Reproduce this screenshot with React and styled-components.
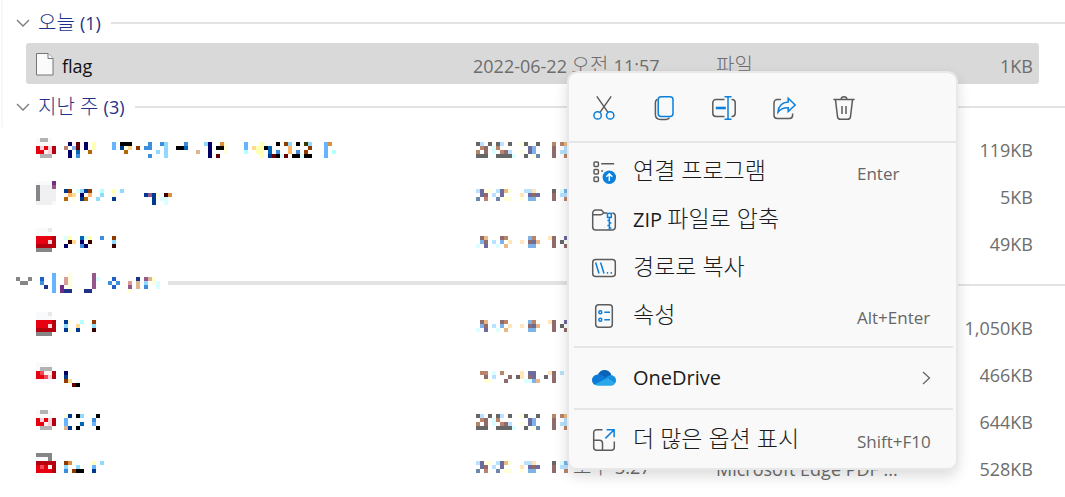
import React from 'react';
import styled, { createGlobalStyle } from 'styled-components';

const palette = {
  k: '#000000', n: '#000066', m: '#660000', M: '#3a0000', b: '#003a90', B: '#0066b6',
  u: '#3b8fdc', s: '#66b3ff', l: '#90d9ff', c: '#b6ffff', C: '#dbffff', y: '#ffffb6',
  Y: '#ffffdb', o: '#ffb666', O: '#ffdb90', t: '#db903a', r: '#903a00', a: '#b66600',
  p: '#dbb690', q: '#3a3a00', d: '#1f5fc8', N: '#1e3287', v: '#6f2f86', V: '#96588a',
  x: '#dc9c9c', R: '#e60012', D: '#b5000f', P: '#fbd3d8', W: '#fff0f0', Q: '#f04a58',
  G: '#b3b3b3', g: '#868686', e: '#e8e8e8', f: '#f9fafc', i: '#f0f0f3',
  1: '#666666', 2: '#8f6b6b', 3: '#b8856b', 4: '#7fb2e8', 5: '#6b6b9c', 6: '#e8b885',
  7: '#ffe6b8', 8: '#b8e2ff', 9: '#6b88a8',
};

// cells are listed column by column, top to bottom; "-" is an empty column
const icons = {
  scan: 'ffRRf GfPRG GfRWG ffPPG ..DD.',
  plain: 'fggggi fiiiii fiiiii fiiiii vViiif',
  solid: 'ffRRDg ffRRDg ffRRDg efRPDg ..DDD.',
  fold: 'ffRRf fGQRf fGWQf fGWPf ..DD.',
  dark: 'gfDRR gfDQR gfDRR ggDWR ..DDD',
};

const dates = {
  a: '1.31 83.1 .221 1... .CC. 13.1 8.31 ..21 1.81 ...C - Y.Y. 1..1 .55. .44Y 1..9 - - - 3222 - 3.8. 6883',
  b: '8.9 55. Y23 Y.. .8. 8.9 55. 6.Y Y.Y - - .7Y 8.. 854 724 .5. - - - 122 - C8. 483',
  c: '..C 24. 625 - .8. ..C 24. 3.6 .7. - - .7. - 424 354 .6. - - 7.. 222 - .1. 5.2',
  d: '- 3.. 32Y ..Y C8. - 3.. ..2 .2. - .1. 77. ..C 52C 554 ..6 - .1. 7.. 222 - 8..',
};

const olderLabel =
  '.g ..g ..g .g - - .du.. ...N. - sssss - ...vv .xx.N YYYYN - - - ....N ....N VVVV. .C - - ..u.. .d.d. ..u.. - - ..xVY - .Npp. - .Vlu. .p .YY.. ..CC.';

const lastWeek = [
  {
    icon: 'scan', iconTop: 1, nameTop: 2, dateTop: 2, date: 'a', size: '119KB',
    name: '.3.. n.nn .4.. mmBu - nn.. ..a. yy.. - - - - ss.. - kb.. kYa. kO.. - .r.. - .u.. uu.u - ..l. u... llll - - .k.. .k.. uB.. - - ..p. - l... nnnn - .k.m tk.. YYY. - - - - ssc. - .O.. .yy. yyyy .k.. .BBb ...m k.uk ...C r..m loo. ...k k.uk ...C q.rk lr.k - - - ssss t... ..c.',
  },
  {
    icon: 'plain', iconTop: 0, nameTop: 2, dateTop: 2, date: 'b', size: '5KB',
    name: 'b.a ro. .OY C.. lnb b.a ro. - ..l cl. - - yYb - l.. - - - - - .b.. .V.. .bbb .Y.. ..C. .MCC .t..',
  },
  {
    icon: 'solid', iconTop: 0, nameTop: 2, dateTop: 2, date: 'c', size: '49KB',
    name: 'C.n yM. .O. - Bnu C.n yM. - - u.. - - rlM',
  },
];

const older = [
  {
    icon: 'solid', iconTop: 0, nameTop: 2, dateTop: 2, date: 'c', size: '1,050KB',
    name: 'blb Y.Y - .Ob c.. - - rlM',
  },
  { icon: 'fold', iconTop: 1, nameTop: 3, dateTop: 3, date: 'd', size: '466KB', name: 'nbr. ..O. ...m ...k' },
  {
    icon: 'scan', iconTop: 1, nameTop: 2, dateTop: 2, date: 'a', size: '644KB',
    name: 'Yssp b..b - k..k l.B. - - .us. k..k',
  },
  {
    icon: 'dark', iconTop: 0, nameTop: 2, dateTop: 2, date: 'b', size: '528KB',
    name: 'rlu t.. ..r .lk ..k - - ysb - l..',
    time: '오후 3:27', type: 'Microsoft Edge PDF ...',
  },
];

function Mosaic({ cells, top = 0, rows = 7 }) {
  const columns = cells.split(' ');
  return (
    <MosaicSvg width={columns.length * 4} height={rows * 4} shapeRendering="crispEdges" aria-hidden="true">
      {columns.map((column, x) =>
        [...column].map((cell, y) =>
          palette[cell] ? (
            <rect key={`${x}-${y}`} x={x * 4} y={(y + top) * 4} width="4" height="4" fill={palette[cell]} />
          ) : null
        )
      )}
    </MosaicSvg>
  );
}

// Hangul is set a little larger than the Latin text and digits beside it
function Mixed({ text, size = 20 }) {
  return text.split(/([가-힣][가-힣 ]*)/).filter(Boolean).map(part =>
    /[가-힣]/.test(part) ? <Hangul key={part} $size={size}>{part}</Hangul> : part
  );
}

function Icon({ children }) {
  return (
    <IconSvg width="24" height="24" viewBox="0 0 24 24" aria-hidden="true">
      {children}
    </IconSvg>
  );
}

const CutIcon = () => (
  <Icon>
    <path d="M4.8.4 16 16.4M19.2.4 8 16.4" />
    <g className="accent">
      <circle cx="5.6" cy="19.4" r="3.7" />
      <circle cx="18.2" cy="19.4" r="3.7" />
    </g>
  </Icon>
);

const CopyIcon = () => (
  <Icon>
    <path d="M5.5 3.2C4 3.8 3.4 5 3.4 6.6v11.6c0 3.2 2 5.2 5.2 5.2h5.6c1.6 0 2.6-.5 3.2-1.7" />
    <rect className="accent" x="6.2" y=".8" width="14.8" height="19.8" rx="3" />
  </Icon>
);

const RenameIcon = () => (
  <Icon>
    <path d="M12.5 3.6H4A3.2 3.2 0 0 0 .8 6.8v10.4A3.2 3.2 0 0 0 4 20.4h8.500M19.5 3.6h.5a3.2 3.2 0 0 1 3.2 3.2v10.4a3.2 3.2 0 0 1-3.2 3.2h-.5" />
    <g className="accent">
      <path d="M16 .8v22.4M12.500.8h7M12.5 23.2h7" />
      <path d="M3.8 12h10" strokeWidth="2.6" />
    </g>
  </Icon>
);

const ShareIcon = () => (
  <Icon>
    <path d="M9 3.6H5.2A3.2 3.2 0 0 0 2 6.8v12.4a3.2 3.2 0 0 0 3.2 3.2h12.2a3.2 3.2 0 0 0 3.2-3.2v-1.8" />
    <path className="accent" d="M16.2 2.2 23.2 9l-7 6.6v-3.8c-4.4-.2-7.6 1-10.200 4.400.4-6 4-9.800 10.200-10.200z" />
  </Icon>
);

const TrashIcon = () => (
  <Icon>
    <path d="M1.4 3.6h21.200M9 3.4C9.2 1.6 10.4.7 12 .7s2.8.9 3 2.7" />
    <path d="m3.5 3.8 2 16.8c.2 1.7 1.3 2.7 3 2.7h7c1.7 0 2.800-1 3-2.700l2-16.800M10 10v8M14 10v8" />
  </Icon>
);

const OpenWithIcon = () => (
  <Icon>
    <rect x="2" y="2" width="4.4" height="4.4" rx="1" />
    <rect x="2" y="9.5" width="4.4" height="4.4" rx="1" />
    <rect x="2" y="17" width="4.4" height="4.4" rx="1" />
    <path d="M9.2 3.8h13M9.2 11h2" />
    <circle cx="17.3" cy="17.3" r="6.7" className="disc" />
    <path d="M17.3 21v-7M14.3 16.8l3-3 3 3" stroke="#fff" />
  </Icon>
);

const ZipIcon = () => (
  <Icon>
    <path d="M15 5H12L10.500 3.100C10 2.4 9.4 2.1 8.5 2.1H3.6A2.9 2.9 0 0 0 .7 5v14a3 3 0 0 0 3 3h16.6a3 3 0 0 0 3-3V8a3 3 0 0 0-3-3M.7 6.8h7.6c.8 0 1.4-.2 2-.8l1.2-1" />
    <g className="accent">
      <rect x="15.5" y="5.4" width="3.8" height="4" />
      <path d="M17.4 9.4V22M17.4 12.5h-2M17.4 15h2M17.4 17.5h-2M17.4 20h2" />
    </g>
  </Icon>
);

const PathIcon = () => (
  <Icon>
    <rect x=".7" y="3.6" width="22.6" height="16.8" rx="3" />
    <path className="accent" d="M3.6 6.6 7 17.4M8.6 6.6 12 17.4" />
    <path className="accent" d="M14.8 16.8h1.4M18.6 16.8H20" strokeWidth="1.8" />
  </Icon>
);

const PropertiesIcon = () => (
  <Icon>
    <rect x="3.7" y=".7" width="16.6" height="22.6" rx="3" />
    <g className="accent">
      <circle cx="8.3" cy="8.2" r="1.5" />
      <circle cx="8.3" cy="15.8" r="1.5" />
      <path d="M12.3 8.2H18M12.3 15.8H18" />
    </g>
  </Icon>
);

const OneDriveIcon = () => (
  <Icon>
    <g stroke="none">
      <path fill="#0a63b8" d="M5.5 9.5C7 5.8 9.5 4 12.5 4c3.5 0 6 2.2 6.9 5.2L13 14z" />
      <path fill="#0f7ad6" d="M6 8.6c2-.2 3.8.4 5.6 1.6l4 2.5L3 19C1.2 18.2 0 16.4 0 14.3c0-3 2.4-5.5 6-5.7z" />
      <path fill="#1490e0" d="M13.5 11.4 17 9.6c4.500-1.400 7 1.700 7 5 0 1.3-.4 2.3-1.2 3.2z" />
      <path fill="#28a8ea" d="m2.4 18.6 12.4-6.3 8.1 5.5c-.9 1.2-2.1 1.9-3.9 1.9H5.6c-1.2 0-2.3-.4-3.2-1.1z" />
    </g>
  </Icon>
);

const MoreIcon = () => (
  <Icon>
    <path d="M10.5 1.7H4.7a3 3 0 0 0-3 3v14.6a3 3 0 0 0 3 3h14.6a3 3 0 0 0 3-3v-5.8M1.7 12.3h5.8a3 3 0 0 1 3 3v7" />
    <path className="accent" d="M13.4 10.4 22.1 1.7M14.6 1.7h7.5v7.6" />
  </Icon>
);

const Chevron = () => (
  <svg width="14" height="9" viewBox="0 0 14 9" fill="none" stroke="#7a7a7a" aria-hidden="true">
    <path d="M1 1l6 6 6-6" strokeWidth="1.3" />
  </svg>
);

const PageIcon = () => (
  <svg width="18" height="23" viewBox="0 0 18 23" fill="#fbfbfb" stroke="#777" aria-hidden="true">
    <path d="M.5.5H12l5 5V22H.5z" />
    <path d="M12 .5v5h5" />
  </svg>
);

const quickActions = [
  ['잘라내기', CutIcon],
  ['복사', CopyIcon],
  ['이름 바꾸기', RenameIcon],
  ['공유', ShareIcon],
  ['삭제', TrashIcon],
];

const commands = [
  ['연결 프로그램', OpenWithIcon, 'Enter'],
  ['ZIP 파일로 압축', ZipIcon],
  ['경로로 복사', PathIcon],
  ['속성', PropertiesIcon, 'Alt+Enter'],
];

function Command({ label, icon: Glyph, shortcut, submenu }) {
  return (
    <CommandButton type="button" role="menuitem">
      <Glyph />
      <span><Mixed text={label} size={23} /></span>
      {shortcut && <Shortcut>{shortcut}</Shortcut>}
      {submenu && (
        <Submenu>
          <svg width="9" height="14" viewBox="0 0 9 14" fill="none" stroke="#666" aria-hidden="true">
            <path d="M1 1l6.5 6L1 13" strokeWidth="1.3" />
          </svg>
        </Submenu>
      )}
    </CommandButton>
  );
}

function ContextMenu() {
  return (
    <Menu role="menu">
      <QuickBar>
        {quickActions.map(([label, Glyph]) => (
          <QuickButton key={label} type="button" aria-label={label}>
            <Glyph />
          </QuickButton>
        ))}
      </QuickBar>
      <Commands>
        {commands.map(([label, icon, shortcut]) => (
          <Command key={label} label={label} icon={icon} shortcut={shortcut} />
        ))}
        <Separator />
        <Command label="OneDrive" icon={OneDriveIcon} submenu />
        <Separator />
        <Command label="더 많은 옵션 표시" icon={MoreIcon} shortcut="Shift+F10" />
      </Commands>
    </Menu>
  );
}

function Files({ children }) {
  return (
    <Table>
      <colgroup>
        <NameCol />
        <DateCol />
        <col />
        <SizeCol />
      </colgroup>
      <tbody>{children}</tbody>
    </Table>
  );
}

function FileRow({ file }) {
  return (
    <Row>
      <Cell>
        <Name>
          <Mosaic cells={icons[file.icon]} top={file.iconTop} />
          <Mosaic cells={file.name} top={file.nameTop} />
        </Name>
      </Cell>
      <Cell>
        <HiddenDate>
          <Mosaic cells={dates[file.date]} top={file.dateTop} />
          {file.time && <span><Mixed text={file.time} /></span>}
        </HiddenDate>
      </Cell>
      <Cell>{file.type}</Cell>
      <Cell $right>{file.size}</Cell>
    </Row>
  );
}

export default function App() {
  return (
    <Explorer>
      <GlobalStyle />
      <GroupHeader>
        <Chevron />
        <GroupTitle><Mixed text="오늘 (1)" /></GroupTitle>
        <Rule />
      </GroupHeader>
      <Files>
        <Row $selected>
          <Cell>
            <Name>
              <PageIcon />
              <FileName>flag</FileName>
            </Name>
          </Cell>
          <Cell><Mixed text="2022-06-22 오전 11:57" /></Cell>
          <Cell><Mixed text="파일" /></Cell>
          <Cell $right>1KB</Cell>
        </Row>
      </Files>
      <GroupHeader>
        <Chevron />
        <GroupTitle><Mixed text="지난 주 (3)" /></GroupTitle>
        <Rule />
      </GroupHeader>
      <Files>
        {lastWeek.map(file => <FileRow key={file.size} file={file} />)}
      </Files>
      <GroupHeader>
        <Mosaic cells={olderLabel} rows={6} />
        <ThickRule />
        <Rule $joined />
      </GroupHeader>
      <Files>
        {older.map(file => <FileRow key={file.size} file={file} />)}
      </Files>
      <ContextMenu />
    </Explorer>
  );
}

const GlobalStyle = createGlobalStyle`
  * {
    box-sizing: border-box;
  }
  body {
    margin: 0;
    background: #fff;
    font-family: 'Open Sans', 'Noto Sans CJK KR Light', 'Noto Sans CJK KR', sans-serif;
    font-size: 18px;
  }
`;

const Explorer = styled.main`
  position: relative;
  min-height: 100vh;
  overflow: hidden;
  background: linear-gradient(#f7f7f7, #f7f7f7) 1px 0 / 2px 127px no-repeat #fff;
`;

const GroupHeader = styled.header`
  display: flex;
  align-items: center;
  gap: 8px;
  height: 43px;
  padding: 3px 0 0 16px;
`;

const GroupTitle = styled.h2`
  margin: 0 2px 0 0;
  font-size: 18px;
  font-weight: 400;
  line-height: 24px;
  color: #1e3287;
`;

const Hangul = styled.span`
  font-size: ${props => props.$size}px;
  line-height: 1;
`;

const Rule = styled.div`
  flex: 1;
  height: 2px;
  margin-left: ${props => (props.$joined ? '-8px' : '0')};
  background: #e3e3e3;
`;

const ThickRule = styled.div`
  width: 400px;
  height: 4px;
  margin-bottom: 4px;
  background: #e3e3e3;
`;

const Table = styled.table`
  table-layout: fixed;
  width: calc(100% - 52px);
  margin: -6px 26px;
  border-collapse: separate;
  border-spacing: 0 6px;
`;

const NameCol = styled.col`
  width: 447px;
`;

const DateCol = styled.col`
  width: 243px;
`;

const SizeCol = styled.col`
  width: 100px;
`;

const Row = styled.tr`
  height: 41px;
  background: ${props => (props.$selected ? '#d9d9d9' : 'transparent')};
`;

const Cell = styled.td`
  padding: ${props => (props.$right ? '4px 6px 0 0' : '4px 0 0')};
  line-height: 24px;
  text-align: ${props => (props.$right ? 'right' : 'left')};
  white-space: nowrap;
  color: #6d6d6d;

  &:first-child {
    padding: 1px 0 0 10px;
    border-radius: 3px 0 0 3px;
  }
  &:last-child {
    border-radius: 0 3px 3px 0;
  }
`;

const Name = styled.div`
  display: flex;
  align-items: center;
  gap: 8px;
`;

const FileName = styled.span`
  padding-top: 4px;
  color: #111;
`;

const HiddenDate = styled.div`
  display: flex;
  align-items: center;
  gap: 5px;
  height: 28px;
  margin-top: -3px;
  padding-left: 3px;
`;

const MosaicSvg = styled.svg`
  display: block;
  flex: none;
`;

const Menu = styled.div`
  position: absolute;
  top: 71px;
  left: 567px;
  width: 391px;
  border: 2px solid #e8e8e8;
  border-radius: 10px;
  background: #f9f9f9;
  background-clip: padding-box;
  box-shadow: 0 6px 14px rgba(0, 0, 0, 0.14);
`;

const QuickBar = styled.div`
  display: flex;
  height: 70px;
  padding: 2px 5px 0;
  border-bottom: 2px solid #e6e6e6;
`;

const QuickButton = styled.button`
  display: flex;
  align-items: center;
  justify-content: center;
  width: 60px;
  padding: 0;
  border: 0;
  background: none;
`;

const Commands = styled.div`
  padding: 5px 3px 4px 5px;
`;

const CommandButton = styled.button`
  display: flex;
  align-items: center;
  gap: 17px;
  width: 100%;
  height: 48px;
  padding: 0 0 0 18px;
  border: 0;
  background: none;
  font-family: inherit;
  font-size: 20px;
  line-height: 28px;
  text-align: left;
  color: #1b1b1b;
`;

const Shortcut = styled.span`
  width: 96px;
  margin-left: auto;
  padding-top: 3px;
  font-size: 17px;
  color: #666;
`;

const Submenu = styled.span`
  display: flex;
  margin-left: auto;
  padding-right: 22px;
`;

const Separator = styled.div`
  height: 2px;
  margin: 6px 0;
  background: #e6e6e6;
`;

const IconSvg = styled.svg`
  flex: none;
  overflow: visible;
  fill: none;
  stroke: #5c5c5c;
  stroke-width: 1.5px;

  .accent {
    stroke: #0a7fdb;
  }
  .disc {
    fill: #0a7fdb;
    stroke: none;
  }
`;
